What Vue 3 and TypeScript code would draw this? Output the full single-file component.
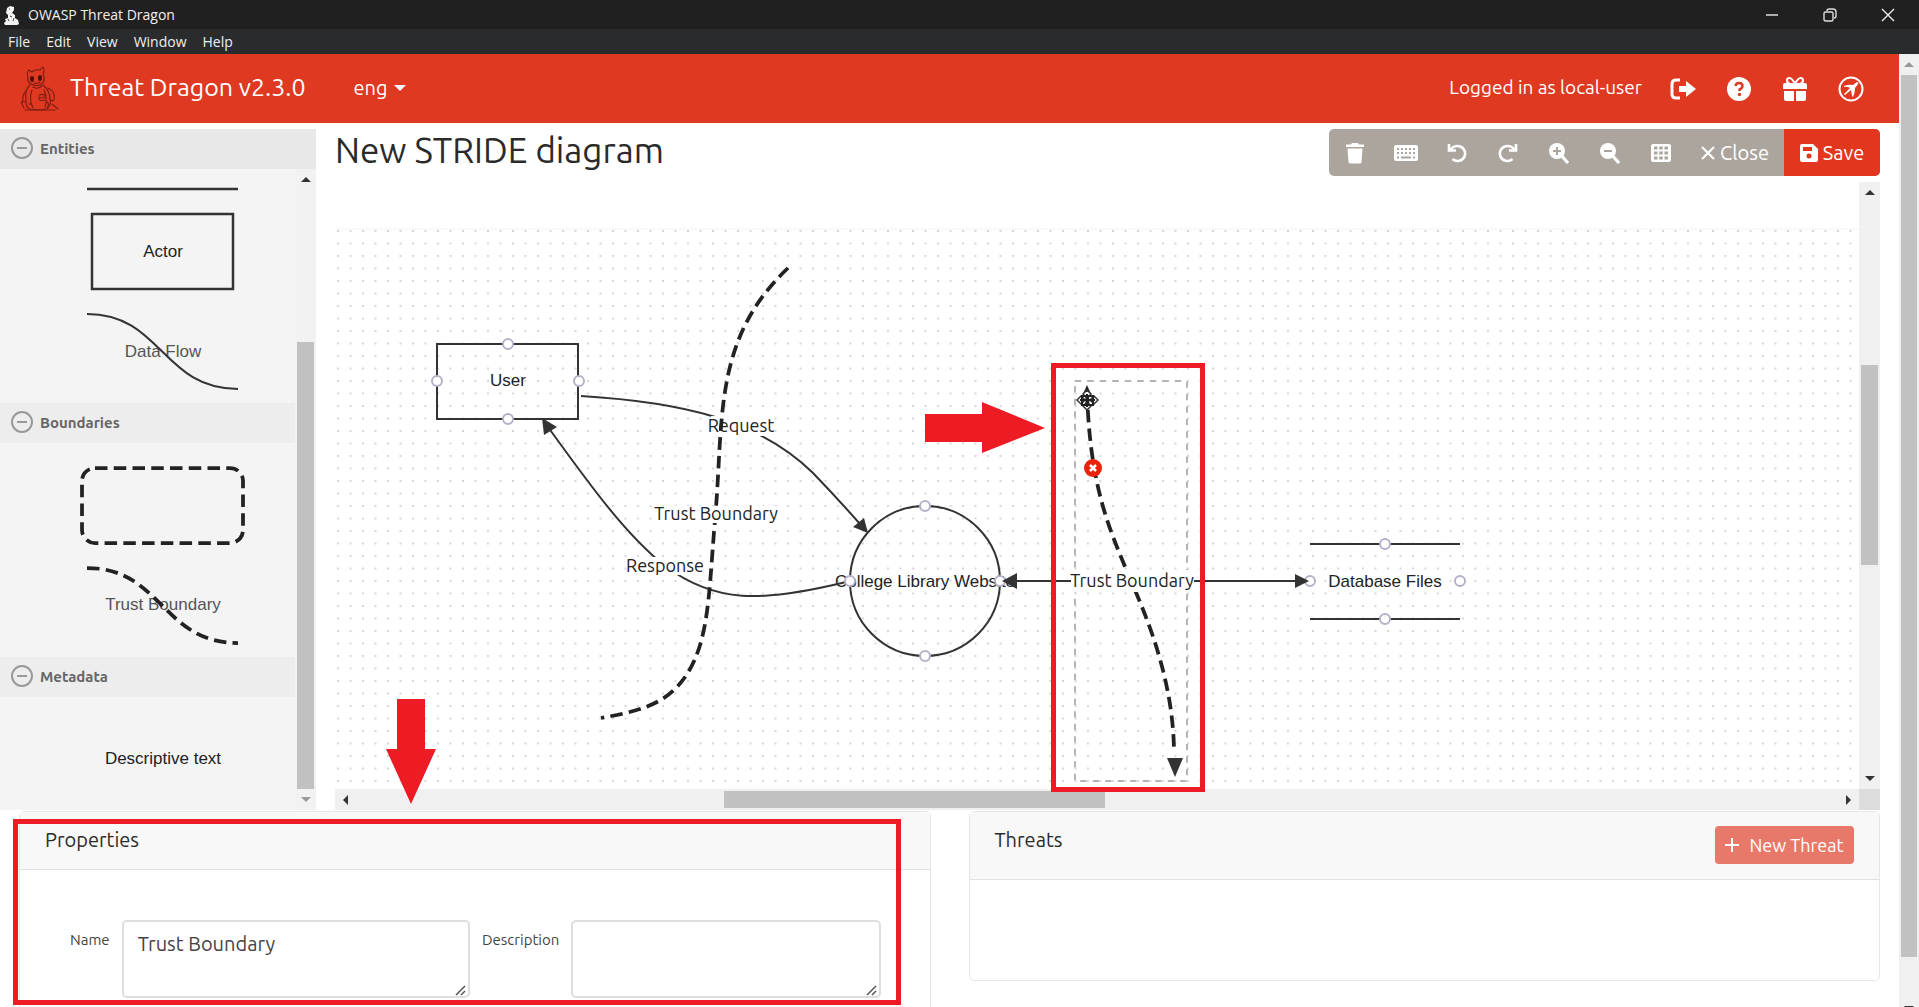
<script setup lang="ts">
import { ref } from 'vue'

interface Point {
  x: number
  y: number
}

const menus: string[] = ['File', 'Edit', 'View', 'Window', 'Help']
const name = ref<string>('Trust Boundary')
const description = ref<string>('')

// Scroll position of the drawing surface
const pan: Point = { x: -335, y: -182 }

const ports: Point[] = [
  { x: 508, y: 344 },
  { x: 508, y: 419 },
  { x: 437, y: 381 },
  { x: 579, y: 381 },
  { x: 925, y: 506 },
  { x: 925, y: 656 },
  { x: 850, y: 581 },
  { x: 1000, y: 581 },
  { x: 1385, y: 544 },
  { x: 1385, y: 619 },
  { x: 1310, y: 581 },
  { x: 1460, y: 581 },
]
</script>

<template>
  <div class="window">
    <div class="titlebar">
      <svg class="app-icon" width="16" height="20" viewBox="0 0 16 20" aria-hidden="true">
        <path d="M3 3l3-2 4 1 0 3-2 3 3 2 0 3 3 2 1 4-2 1H1l-1-2 2-2-1-2 3-1 0-3-2-2z" fill="#f2f2f2" />
        <path d="M5 4h1M6 11l2 1M4 14l1 2M10 13l-1 3" stroke="#444" fill="none" />
      </svg>
      <span class="app-name">OWASP Threat Dragon</span>
      <div class="window-buttons">
        <button type="button" aria-label="Minimize">
          <svg width="14" height="14" viewBox="0 0 14 14"><path d="M1 7h12" stroke="#ddd" stroke-width="1.5" /></svg>
        </button>
        <button type="button" aria-label="Restore">
          <svg width="14" height="14" viewBox="0 0 14 14" fill="none" stroke="#ddd" stroke-width="1.4">
            <rect x="1" y="4" width="9" height="9" rx="1.5" />
            <path d="M4 3q0-2 2-2h4q3 0 3 3v4q0 2-2 2" />
          </svg>
        </button>
        <button type="button" aria-label="Close window">
          <svg width="14" height="14" viewBox="0 0 14 14"><path d="M1 1l12 12M13 1L1 13" stroke="#eee" stroke-width="1.4" /></svg>
        </button>
      </div>
    </div>

    <nav class="menubar">
      <button v-for="m in menus" :key="m" type="button">{{ m }}</button>
    </nav>

    <div class="page">
      <main class="content">
        <header class="navbar">
          <svg class="logo" width="40" height="46" viewBox="0 0 40 46" fill="none" stroke="#7c1d12" stroke-width="1.1" stroke-linecap="round">
            <path d="M8 11Q6 6 9 4L12 6Q15 3 20 4L23 1Q25 4 23 8Q26 14 22 18Q17 21 11 18Q7 16 8 11z" />
            <path d="M10 19Q4 25 6 33Q5 41 10 43Q18 45 26 43Q32 40 30 33Q30 25 23 19" />
            <path d="M7 24Q2 28 3 35Q1 38 4 42M28 22Q36 26 34 34Q31 36 30 33M12 24Q9 32 12 40M24 24Q28 32 25 41M32 38L38 43M5 44h30M6 36Q2 34 1 37M9 38Q12 37 13 42M27 36Q30 38 27 42M13 21Q17 24 22 20" />
            <path d="M19 29Q25 27 25 31Q22 33 19 31Q18 36 25 34M14 17Q17 18 20 16" />
            <ellipse cx="12" cy="13" rx="2" ry="3" fill="#4a120b" stroke="none" />
            <ellipse cx="20" cy="12" rx="2" ry="3" fill="#4a120b" stroke="none" />
          </svg>
          <a class="brand" href="#">Threat Dragon v2.3.0</a>
          <button class="language" type="button">eng<span class="caret"></span></button>
          <span class="user">Logged in as local-user</span>
          <a class="nav-icon" href="#" aria-label="Log out">
            <svg width="26" height="26" viewBox="0 0 26 26">
              <path d="M10 4H6Q2 4 2 8v10q0 4 4 4h4" fill="none" stroke="#fff" stroke-width="3" />
              <path d="M9 10h7V5l10 8-10 8v-5H9z" fill="#fff" />
            </svg>
          </a>
          <a class="nav-icon" href="#" aria-label="Help">
            <svg width="26" height="26" viewBox="0 0 26 26">
              <circle cx="13" cy="13" r="12" fill="#fff" />
              <path d="M9.500 10Q10 7 13 7q3.500 0 3.500 3 0 2-3 3.500V15" fill="none" stroke="#df3921" stroke-width="2.500" />
              <circle cx="13.500" cy="18.500" r="1.700" fill="#df3921" />
            </svg>
          </a>
          <a class="nav-icon" href="#" aria-label="Gift">
            <svg width="26" height="26" viewBox="0 0 26 26" fill="#fff">
              <path d="M1 9q0-2 2-2h20q2 0 2 2v4H1zM2 15h10v10H4q-2 0-2-2zM14 15h10v8q0 2-2 2h-8z" />
              <path d="M13 8Q10 2 7.500 2 5 2 5 4.500T8 8zM13 8q3-6 5.500-6T21 4.500 18 8z" fill="none" stroke="#fff" stroke-width="2.200" />
            </svg>
          </a>
          <a class="nav-icon" href="#" aria-label="About">
            <svg width="26" height="26" viewBox="0 0 26 26" fill="none" stroke="#fff">
              <circle cx="13" cy="13" r="11.500" stroke-width="2" />
              <path d="M6 10q5-2 9-1l4-3q2 0 1 2l-3 4q0 5-2 9l-1-1-1-6-6 5-1-1 6-6q-3-2-6-1z" fill="#fff" stroke="none" />
            </svg>
          </a>
        </header>

        <section class="workspace">
          <aside class="stencil">
            <h3 class="group wide">
              <svg width="22" height="22" viewBox="0 0 22 22"><circle cx="11" cy="11" r="10" /><path d="M6 11h10" /></svg>Entities
            </h3>
            <div class="stencil-body">
              <div class="stencil-list">
                <svg class="shapes" width="295" height="234">
                  <path d="M87 20h151" class="edge thick" />
                  <rect x="92" y="45" width="141" height="75" class="edge thick" />
                  <text x="163" y="88">Actor</text>
                  <text x="163" y="188" class="faded">Data Flow</text>
                  <path d="M87 145C162 145 162 220 238 220" class="edge" />
                </svg>
                <h3 class="group">
                  <svg width="22" height="22" viewBox="0 0 22 22"><circle cx="11" cy="11" r="10" /><path d="M6 11h10" /></svg>Boundaries
                </h3>
                <svg class="shapes" width="295" height="214">
                  <rect x="82" y="25" width="161" height="75" rx="13" class="boundary" />
                  <text x="163" y="167" class="faded">Trust Boundary</text>
                  <path d="M87 125C162 125 162 200 238 200" class="boundary" />
                </svg>
                <h3 class="group">
                  <svg width="22" height="22" viewBox="0 0 22 22"><circle cx="11" cy="11" r="10" /><path d="M6 11h10" /></svg>Metadata
                </h3>
                <svg class="shapes" width="295" height="113">
                  <text x="163" y="67">Descriptive text</text>
                </svg>
              </div>
              <div class="bar vertical stencil-bar">
                <i class="arrow up"></i>
                <div class="thumb stencil-thumb"></div>
                <i class="arrow down dim"></i>
              </div>
            </div>
          </aside>

          <div class="diagram">
            <div class="heading">
              <h2>New STRIDE diagram</h2>
              <div class="toolbar">
                <button type="button" aria-label="Delete">
                  <svg width="20" height="22" viewBox="0 0 20 22" fill="#fff"><path d="M1 2.500h5L7 1h6l1 1.500h5V5H1zM2.500 6.500h15L16.500 20q0 1.500-2 1.500h-9q-2 0-2-1.500z" /></svg>
                </button>
                <button type="button" aria-label="Keyboard shortcuts">
                  <svg width="24" height="22" viewBox="0 0 24 22">
                    <rect x="0" y="3" width="24" height="16" rx="2" fill="#fff" />
                    <path d="M3 7h18M3 11h18" stroke="#aba59d" stroke-width="2" stroke-dasharray="2 2" />
                    <path d="M3 15.500h2M7 15.500h10M19 15.500h2" stroke="#aba59d" stroke-width="2" />
                  </svg>
                </button>
                <button type="button" aria-label="Undo">
                  <svg width="20" height="22" viewBox="0 0 20 22" fill="none" stroke="#fff" stroke-width="2.600"><path d="M2 2v6.500h7" /><path d="M3 8Q6 4 10.500 4a7.500 7.500 0 1 1-5 13" /></svg>
                </button>
                <button type="button" aria-label="Redo">
                  <svg width="20" height="22" viewBox="0 0 20 22" fill="none" stroke="#fff" stroke-width="2.600"><path d="M18 2v6.500h-7" /><path d="M17 8Q14 4 9.500 4a7.500 7.500 0 1 0 5 13" /></svg>
                </button>
                <button type="button" aria-label="Zoom in">
                  <svg width="20" height="22" viewBox="0 0 20 22"><circle cx="8" cy="9" r="8" fill="#fff" /><path d="M12 13l7 8" stroke="#fff" stroke-width="3.200" /><path d="M4 9h8M8 5v8" stroke="#aba59d" stroke-width="2" /></svg>
                </button>
                <button type="button" aria-label="Zoom out">
                  <svg width="20" height="22" viewBox="0 0 20 22"><circle cx="8" cy="9" r="8" fill="#fff" /><path d="M12 13l7 8" stroke="#fff" stroke-width="3.200" /><path d="M4 9h8" stroke="#aba59d" stroke-width="2" /></svg>
                </button>
                <button type="button" aria-label="Toggle grid">
                  <svg width="20" height="22" viewBox="0 0 20 22"><rect x="0" y="2" width="20" height="18" rx="2" fill="#fff" /><path d="M3 6h14M3 11h14M3 16h14" stroke="#aba59d" stroke-width="3" stroke-dasharray="3.500 1.750" /></svg>
                </button>
                <button type="button" class="close">
                  <svg width="14" height="14" viewBox="0 0 14 14"><path d="M1 1l12 12M13 1L1 13" stroke="#fff" stroke-width="2.200" /></svg>Close
                </button>
                <button type="button" class="save">
                  <svg width="18" height="18" viewBox="0 0 18 18"><path d="M0 2q0-2 2-2h11l5 5v11q0 2-2 2H2q-2 0-2-2z" fill="#fff" /><path d="M3 3h9v4H3z" fill="#e2361f" /><circle cx="9" cy="12" r="2.500" fill="#e2361f" /></svg>Save
                </button>
              </div>
            </div>

            <div class="canvas-frame">
              <div class="canvas-row">
                <svg class="canvas">
                  <defs>
                    <pattern id="dots" x="337" y="230" width="12.5" height="12.5" patternUnits="userSpaceOnUse">
                      <rect width="2" height="2" fill="#d6d6d6" />
                    </pattern>
                  </defs>
                  <g :transform="`translate(${pan.x} ${pan.y})`">
                    <rect x="336" y="229" width="3000" height="561" fill="url(#dots)" />
                    <path d="M336 229h3000" stroke="#f3f3f3" />

                    <rect x="437" y="344" width="141" height="75" class="edge" />
                    <text x="508" y="386">User</text>
                    <circle cx="925" cy="581" r="75" class="edge" />
                    <text x="925" y="587">College Library Website</text>
                    <path d="M1310 544h150M1310 619h150" class="edge" />
                    <text x="1385" y="587">Database Files</text>

                    <path d="M581 396C680 402 758 419 813 473Q838 499 860 524" class="edge" />
                    <path d="M868 533l-15-6 11-9z" class="head" />
                    <path d="M846 582C760 603 715 603 665 566C625 534 590 485 548 427" class="edge" />
                    <path d="M542 418l2 17 13-8z" class="head" />
                    <path d="M1010 581h292" class="edge" />
                    <rect x="711" y="416" width="62" height="20" fill="#fff" />
                    <rect x="627" y="557" width="76" height="18" fill="#fff" />
                    <text x="741" y="432" class="label">Request</text>
                    <text x="665" y="572" class="label">Response</text>

                    <path d="M788 268C712 340 724 420 715 520C708 600 710 655 674 690C655 708 628 713 601 718" class="boundary" />
                    <rect x="656" y="506" width="120" height="17" fill="#fff" />
                    <text x="716" y="520" class="label">Trust Boundary</text>

                    <circle v-for="(p, i) in ports" :key="i" :cx="p.x" :cy="p.y" r="5" class="port" />
                    <path d="M1002 581l15-8v16zM1309 581l-14-7v14z" class="head" />

                    <rect x="1075" y="381" width="112" height="400" fill="none" stroke="#b4b4b4" stroke-width="2" stroke-dasharray="6.25 6.25" />
                    <path d="M1087 391C1090 490 1110 530 1131 581C1155 635 1173 690 1174 750" class="boundary" />
                    <path d="M1175 777l-8-19h16z" class="head" />
                    <rect x="1071" y="570" width="123" height="22" fill="#fff" />
                    <text x="1132" y="587" class="label">Trust Boundary</text>
                    <circle cx="1093" cy="468" r="9" fill="#e8220c" />
                    <path d="M1090 465l6 6M1096 465l-6 6" stroke="#fff" stroke-width="2.500" />
                    <path d="M1087 385l4 9h-8z" fill="#222" />
                    <g fill="#fff" stroke="#333" stroke-width="1.500">
                      <path d="M1087 390l4 4-4 4-4-4zM1087 402l4 4-4 4-4-4zM1077 400l4-4 4 4-4 4zM1090 400l4-4 4 4-4 4z" />
                    </g>
                    <path d="M1080 400h15M1087 394v13M1082 396h11v9h-11z" stroke="#222" stroke-width="2" fill="none" />
                  </g>
                </svg>
                <div class="bar vertical">
                  <i class="arrow up"></i>
                  <div class="thumb canvas-thumb"></div>
                  <i class="arrow down"></i>
                </div>
              </div>
              <div class="canvas-bottom">
                <div class="bar horizontal">
                  <i class="arrow left"></i>
                  <div class="thumb wide-thumb"></div>
                  <i class="arrow right"></i>
                </div>
                <div class="corner"></div>
              </div>
              <svg class="markup" aria-hidden="true">
                <g :transform="`translate(${pan.x} ${pan.y})`">
                  <rect x="1053.500" y="365.500" width="149" height="424" fill="none" stroke="#ed1c24" stroke-width="5" />
                  <path d="M925 414h57v-12l63 26-63 25v-11h-57z" fill="#ed1c24" />
                  <path d="M397 699h28v50h11l-25 55-25-55h11z" fill="#ed1c24" />
                </g>
              </svg>
            </div>
          </div>
        </section>

        <section class="cards">
          <div class="card">
            <div class="card-header">Properties</div>
            <form class="fields" @submit.prevent>
              <label for="name">Name</label>
              <div class="field name-field">
                <textarea id="name" v-model="name"></textarea>
                <svg class="grip" width="12" height="12" viewBox="0 0 12 12"><path d="M1 11L10 2M6 11l4-4" stroke="#555" stroke-width="1.500" /></svg>
              </div>
              <label for="description">Description</label>
              <div class="field description-field">
                <textarea id="description" v-model="description"></textarea>
                <svg class="grip" width="12" height="12" viewBox="0 0 12 12"><path d="M1 11L10 2M6 11l4-4" stroke="#555" stroke-width="1.500" /></svg>
              </div>
            </form>
            <div class="highlight"></div>
          </div>
          <div class="card threats">
            <div class="card-header">
              Threats
              <button type="button" class="new-threat">
                <svg width="14" height="14" viewBox="0 0 14 14"><path d="M7 0v14M0 7h14" stroke="#fff" stroke-width="2" /></svg>New Threat
              </button>
            </div>
          </div>
        </section>
      </main>

      <div class="bar vertical page-bar">
        <i class="arrow up dim"></i>
        <div class="thumb page-thumb"></div>
        <i class="arrow down"></i>
      </div>
    </div>
  </div>
</template>

<style>
body {
  margin: 0;
}
</style>

<style scoped>
* {
  box-sizing: border-box;
}
.window {
  height: 100vh;
  overflow: hidden;
  display: flex;
  flex-direction: column;
  background: #fff;
  color: #2a2a2a;
  font-family: Ubuntu, 'Noto Sans', sans-serif;
}
button {
  border: 0;
  padding: 0;
  background: none;
  color: inherit;
  font: inherit;
}
.titlebar {
  flex: none;
  height: 29px;
  padding-left: 4px;
  display: flex;
  align-items: center;
  gap: 8px;
  background: #202020;
  color: #f0f0f0;
  font: 14px 'Open Sans', sans-serif;
}
.window-buttons {
  margin-left: auto;
  margin-right: 24px;
  display: flex;
  gap: 44px;
}
.window-buttons button {
  display: flex;
}
.menubar {
  flex: none;
  height: 25px;
  padding-left: 8px;
  display: flex;
  align-items: center;
  gap: 16px;
  background: #292b2c;
  color: #f0f0f0;
  font: 14px 'Open Sans', sans-serif;
}
.page {
  flex: 1;
  min-height: 0;
  display: flex;
}
.content {
  flex: 1;
  min-width: 0;
}
.navbar {
  height: 69px;
  padding: 0 35px 0 20px;
  display: flex;
  align-items: center;
  background: #df3921;
  color: #fff;
  font-size: 20px;
}
.brand {
  margin-left: 10px;
  padding-bottom: 4px;
  color: #fff;
  font-size: 25px;
  text-decoration: none;
}
.language {
  margin-left: 48px;
  padding-bottom: 2px;
  display: flex;
  align-items: center;
  gap: 6px;
}
.caret {
  border: 6px solid transparent;
  border-top-color: #fff;
  border-bottom: 0;
}
.user {
  margin-left: auto;
  padding-bottom: 4px;
  font-size: 19px;
}
.nav-icon {
  margin-left: 30px;
  display: flex;
}
.user + .nav-icon {
  margin-left: 28px;
}
.workspace {
  margin-top: 6px;
  display: flex;
  gap: 19px;
}
.stencil {
  width: 316px;
  flex: none;
  background: #f4f4f4;
}
.stencil-body {
  display: flex;
}
.stencil-list {
  flex: 1;
  min-width: 0;
}
.group {
  height: 40px;
  margin: 0;
  padding: 0 0 2px 11px;
  display: flex;
  align-items: center;
  gap: 7px;
  background: #ededed;
  color: #666;
  font-size: 15px;
}
.group.wide {
  background: #e8e8e8;
}
.group svg {
  fill: none;
  stroke: #999;
  stroke-width: 2;
}
.shapes {
  display: block;
}
.shapes text,
.canvas text {
  fill: #222;
  font: 17px 'Liberation Sans', Arial, sans-serif;
  text-anchor: middle;
}
.shapes text.faded {
  fill: #555;
}
.canvas text.label {
  font: 18px Ubuntu, 'Noto Sans', sans-serif;
}
.edge {
  fill: none;
  stroke: #333;
  stroke-width: 2;
}
.edge.thick {
  stroke-width: 2.5;
}
.boundary {
  fill: none;
  stroke: #222;
  stroke-width: 3.75;
  stroke-dasharray: 12.5 6.25;
}
.head {
  fill: #333;
}
.port {
  fill: #fff;
  stroke: #b4b1c9;
  stroke-width: 2;
}
.bar {
  display: flex;
  align-items: center;
  background: #f0f0f0;
}
.vertical {
  width: 21px;
  flex: none;
  flex-direction: column;
  justify-content: space-between;
  position: relative;
}
.horizontal {
  flex: 1;
  height: 21px;
  justify-content: space-between;
  position: relative;
}
.thumb {
  position: absolute;
  background: #c1c1c1;
}
.vertical .thumb {
  left: 2px;
  right: 2px;
}
.stencil-bar {
  background: #f2f2f2;
}
.stencil-bar .stencil-thumb {
  top: 173px;
  bottom: 21px;
}
.canvas-thumb {
  top: 183px;
  height: 200px;
}
.wide-thumb {
  top: 2px;
  bottom: 2px;
  left: 25.5%;
  width: 25%;
}
.page-thumb {
  top: 21px;
  bottom: 50px;
}
.page-bar {
  width: 20px;
}
.arrow {
  border: 5px solid transparent;
}
.arrow.up {
  margin-top: 8px;
  border-top: 0;
  border-bottom-color: #333;
}
.arrow.down {
  margin-bottom: 8px;
  border-bottom: 0;
  border-top-color: #333;
}
.arrow.up.dim {
  border-bottom-color: #999;
}
.arrow.down.dim {
  border-top-color: #999;
}
.page-bar .arrow.down {
  margin-bottom: -4px;
}
.arrow.left {
  margin-left: 8px;
  border-left: 0;
  border-right-color: #333;
}
.arrow.right {
  margin-right: 8px;
  border-right: 0;
  border-left-color: #333;
}
.diagram {
  flex: 1;
  min-width: 0;
  padding-right: 19px;
  display: flex;
  flex-direction: column;
  gap: 6px;
}
.heading {
  height: 47px;
  display: flex;
  justify-content: space-between;
}
h2 {
  margin: 0;
  font-size: 35px;
  font-weight: 400;
  line-height: 43px;
}
.toolbar {
  display: flex;
  border-radius: 5px;
  overflow: hidden;
  background: #aba59d;
  color: #fff;
  font-size: 20px;
}
.toolbar button {
  width: 51px;
  display: flex;
  align-items: center;
  justify-content: center;
  gap: 5px;
}
.toolbar .close {
  width: 98px;
}
.toolbar .save {
  width: 96px;
  background: #e2361f;
}
.canvas-frame {
  flex: 1;
  display: flex;
  flex-direction: column;
  position: relative;
}
.canvas-row {
  flex: 1;
  display: flex;
}
.canvas {
  flex: 1;
  min-width: 0;
  height: 607px;
}
.canvas-bottom {
  display: flex;
}
.corner {
  width: 21px;
  background: #dcdcdc;
}
.markup {
  position: absolute;
  inset: 0;
  width: 100%;
  height: 100%;
  pointer-events: none;
}
.cards {
  margin-top: 1px;
  padding: 0 19px;
  display: grid;
  grid-template-columns: 1fr 1fr;
  gap: 38px;
  align-items: start;
}
.card {
  position: relative;
  height: 240px;
  border: 1px solid #e6e6e6;
  border-radius: 5px;
}
.card-header {
  height: 58px;
  padding: 0 25px;
  display: flex;
  justify-content: space-between;
  border-bottom: 1px solid #e2e2e2;
  background: #f8f8f8;
  font-size: 20px;
  line-height: 56px;
}
.threats {
  height: 170px;
}
.threats .card-header {
  height: 68px;
}
.new-threat {
  width: 139px;
  height: 38px;
  margin-top: 14px;
  display: flex;
  align-items: center;
  justify-content: center;
  gap: 10px;
  border-radius: 4px;
  background: #e8796a;
  color: #fff;
  font-size: 18px;
  line-height: 38px;
}
.fields {
  padding: 50px 49px 0 50px;
  display: flex;
  align-items: flex-start;
  gap: 12px;
  color: #444;
}
.fields label {
  font-size: 15px;
  line-height: 40px;
}
.field {
  position: relative;
}
.name-field {
  flex: 347;
}
.description-field {
  flex: 308;
}
textarea {
  display: block;
  width: 100%;
  height: 78px;
  padding: 8px 14px;
  border: 2px solid #dedede;
  border-radius: 5px;
  resize: none;
  outline: 0;
  color: #444;
  font: 20px/28px Ubuntu, 'Noto Sans', sans-serif;
}
.grip {
  position: absolute;
  right: 3px;
  bottom: 2px;
}
.highlight {
  position: absolute;
  top: 7px;
  left: -7px;
  right: 29px;
  height: 186px;
  border: 5px solid #ed1c24;
  pointer-events: none;
}
</style>
